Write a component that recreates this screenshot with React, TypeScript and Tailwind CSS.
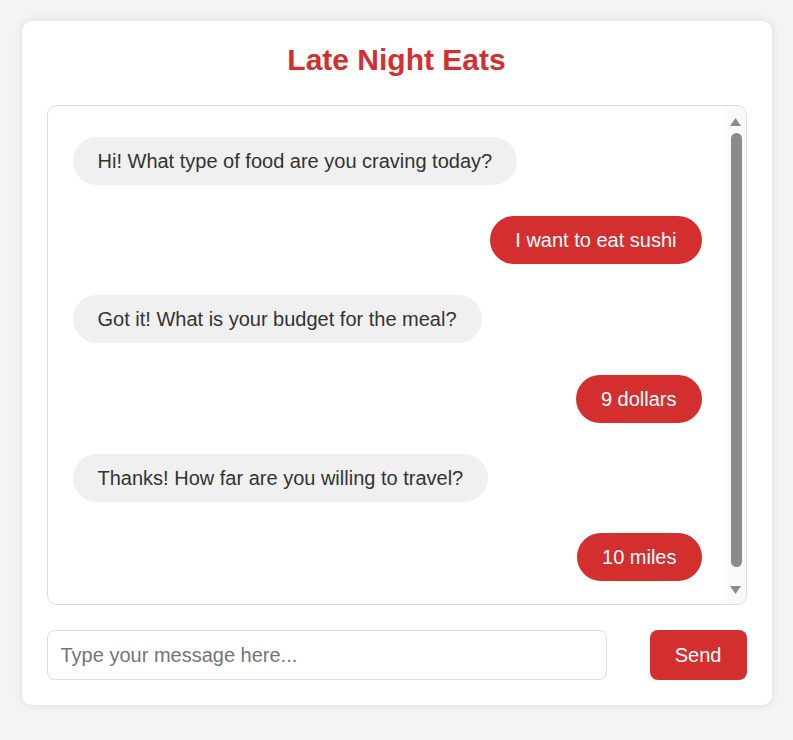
const messages = [
  { from: "bot", text: "Hi! What type of food are you craving today?" },
  { from: "user", text: "I want to eat sushi" },
  { from: "bot", text: "Got it! What is your budget for the meal?" },
  { from: "user", text: "9 dollars" },
  { from: "bot", text: "Thanks! How far are you willing to travel?" },
  { from: "user", text: "10 miles" },
];

function ScrollBar() {
  return (
    <div className="flex w-[19px] shrink-0 flex-col items-center bg-[#f9f9f9] pt-[12px] pb-[10px]">
      <svg width="11" height="8" viewBox="0 0 11 8" className="ml-[-1px]">
        <path d="M5.5 0 L11 8 L0 8 Z" fill="#8b8b8b" />
      </svg>
      <div className="mt-[7px] ml-[1px] w-[11px] flex-1 rounded-full bg-[#8b8b8b]" />
      <svg width="11" height="8" viewBox="0 0 11 8" className="mt-[19px] ml-[-1px]">
        <path d="M0 0 L11 0 L5.5 8 Z" fill="#8b8b8b" />
      </svg>
    </div>
  );
}

export default function App() {
  return (
    <main className="min-h-screen bg-[#f4f4f4] pt-[21px] font-['Liberation_Sans',Arial,sans-serif]">
      <div className="mx-auto w-[750px] rounded-[10px] bg-white px-[25px] pt-[22px] pb-[25px] shadow-[0_0_10px_rgba(0,0,0,0.1)]">
        {/* TITLE */}
        <h1 className="mb-[28px] text-center text-[30px] leading-[34px] font-bold text-[#d32f2f]">
          Late Night Eats
        </h1>

        {/* CHAT */}
        <div className="flex h-[500px] overflow-hidden rounded-[10px] border border-[#ddd]">
          <div className="flex flex-1 flex-col gap-[31.2px] overflow-hidden px-[25px] pt-[31px]">
            {messages.map((m, i) => (
              <div
                key={i}
                className={
                  m.from === "user"
                    ? "flex justify-end"
                    : "flex justify-start"
                }
              >
                <div
                  className={
                    m.from === "user"
                      ? "rounded-full bg-[#d32f2f] px-[25px] py-3 text-[20px] leading-6 text-white"
                      : "rounded-full bg-[#f0f0f0] px-[25px] py-3 text-[20px] leading-6 text-[#333]"
                  }
                >
                  {m.text}
                </div>
              </div>
            ))}
          </div>
          <ScrollBar />
        </div>

        {/* INPUT */}
        <div className="mt-[25px] flex items-center gap-[43px]">
          <input
            type="text"
            placeholder="Type your message here..."
            className="h-[50px] flex-1 rounded-[8px] border border-[#ddd] px-[13px] text-[20px] text-[#333] outline-none placeholder:text-[#757575]"
          />
          <button className="h-[50px] rounded-[8px] bg-[#d32f2f] px-[25px] text-[20px] text-white">
            Send
          </button>
        </div>
      </div>
    </main>
  );
}
